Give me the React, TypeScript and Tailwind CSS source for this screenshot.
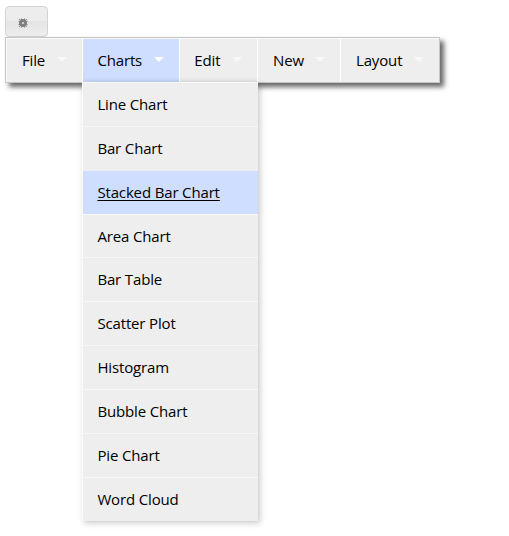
const tabs = [
  { label: 'File', width: 'w-[77px]', pad: 'pl-[15px]', arrow: 'left-[50px]' },
  { label: 'Charts', width: 'w-[97px]', pad: 'pl-[14.4px]', arrow: 'left-[71px]' },
  { label: 'Edit', width: 'w-[78px]', pad: 'pl-[14.3px]', arrow: 'left-[52px]' },
  { label: 'New', width: 'w-[83px]', pad: 'pl-[15px]', arrow: 'left-[57px]' },
  { label: 'Layout', width: 'w-[98px]', pad: 'pl-[15px]', arrow: 'left-[73px]' },
];

const charts = [
  'Line Chart',
  'Bar Chart',
  'Stacked Bar Chart',
  'Area Chart',
  'Bar Table',
  'Scatter Plot',
  'Histogram',
  'Bubble Chart',
  'Pie Chart',
  'Word Cloud',
];

function Gear() {
  return (
    <svg width="10" height="10" viewBox="0 0 10 10" fill="none" stroke="#808080">
      <circle cx="5" cy="5" r="2.5" strokeWidth="3" />
      <path
        d="M3.500 0.500v2M6.500 0.500v2M3.500 7.500v2M6.500 7.500v2M0.500 3.500h2M0.500 6.500h2M7.500 3.500h2M7.500 6.500h2M1.200 1.200l1.600 1.600M8.800 1.200L7.200 2.800M1.200 8.800l1.600-1.600M8.800 8.800L7.200 7.200"
        strokeWidth="1"
      />
    </svg>
  );
}

function Submenu() {
  return (
    <ul className="absolute left-[-1px] top-[43px] z-10 w-[176px] border-l border-[#fafafa] bg-[#eeeeee] shadow-[2px_2px_6px_rgba(0,0,0,0.22)]">
      {charts.map((name, i) => (
        <li
          key={name}
          className={`border-t pl-[14.4px] leading-[43px] ${i === 3 ? 'h-[43px]' : 'h-11'} ${
            i === 2
              ? 'border-[#eeeeee] bg-[#cfddff] underline decoration-1 underline-offset-2 [text-decoration-skip-ink:none]'
              : 'border-[#f8f8f8]'
          }`}
        >
          {name}
        </li>
      ))}
    </ul>
  );
}

export default function App() {
  return (
    <div className="h-[536px] w-[509px] overflow-hidden bg-white pl-[5px] pt-1.5 font-['Open_Sans',sans-serif] text-[15px] tracking-[-0.15px] text-black">
      <button className="flex h-[31px] w-[43px] items-center rounded-[4px] border border-[#d3d3d3] bg-[linear-gradient(#eeeeee_0%,#ececec_48%,#e5e5e5_50%,#ededed_100%)] pl-3 pt-0.5">
        <Gear />
      </button>
      <nav className="flex h-[46px] w-[435px] border border-[#c6c6c6] bg-[#eeeeee] shadow-[4px_4px_5px_rgba(0,0,0,0.6)]">
        {tabs.map((t, i) => (
          <div
            key={t.label}
            className={`relative h-11 shrink-0 border-t border-t-[#fafafa] leading-[43px] ${t.width} ${t.pad} ${
              i === 0 ? 'border-l border-l-[#fafafa]' : ''
            } ${i < 4 ? 'border-r border-r-white' : ''} ${
              i === 1
                ? 'bg-[linear-gradient(#cfddff_88%,#c5d3f4)]'
                : i === 2
                  ? 'bg-[linear-gradient(#eeeeee_88%,#e4e4e4)]'
                  : ''
            }`}
          >
            {t.label}
            <span
              className={`absolute top-[18px] h-0 w-0 border-x-[5px] border-t-[5px] border-x-transparent ${t.arrow} ${
                i === 1 ? 'border-t-white' : 'border-t-[#f8f8f8]'
              }`}
            />
            {i === 1 && <Submenu />}
          </div>
        ))}
      </nav>
    </div>
  );
}
